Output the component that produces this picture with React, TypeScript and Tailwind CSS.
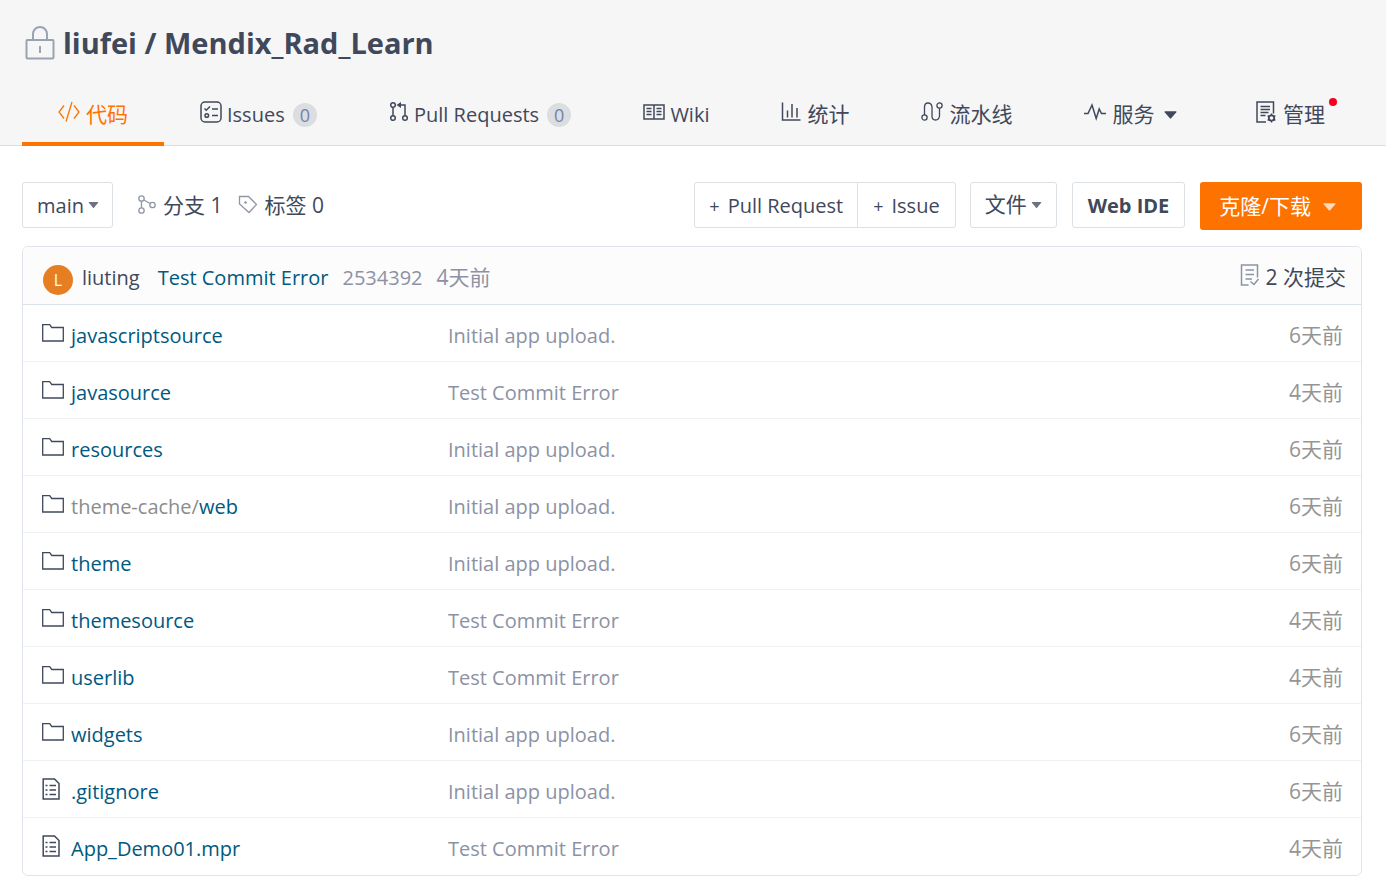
import type { ReactNode } from 'react';

type IconProps = { children: ReactNode; className?: string; box?: string };

function Icon({ children, className = 'h-[22px] w-[22px]', box = '0 0 22 22' }: IconProps) {
  return (
    <svg
      viewBox={box}
      className={`shrink-0 ${className}`}
      fill="none"
      stroke="currentColor"
      strokeWidth="1.5"
      aria-hidden="true"
    >
      {children}
    </svg>
  );
}

const LockIcon = () => (
  <Icon className="h-[34px] w-[30px] text-[#9aa3b4]" box="0 0 30 34">
    <rect x="1.500" y="14" width="27" height="18.500" rx="1" strokeWidth="2" />
    <path d="M8 14V8a7 7 0 0 1 14 0v6" strokeWidth="2" />
    <path d="M15 20v7" strokeWidth="2" />
  </Icon>
);

const CodeIcon = () => (
  <Icon>
    <path d="M6 4.500 1 11l5 6.500M16 4.500 21 11l-5 6.500M14 1 8 20.500" strokeWidth="1.300" />
  </Icon>
);

const IssuesIcon = () => (
  <Icon>
    <rect x="1" y="1" width="20" height="20" rx="4" />
    <path d="m4.500 7.500 1.700 1.700L10 5.500M12 8h6M12 14.500h6" />
    <circle cx="6.800" cy="14.500" r="1.800" />
  </Icon>
);

const PullIcon = () => (
  <Icon className="h-[22px] w-[20px]" box="0 0 20 22">
    <circle cx="4" cy="4" r="2.300" />
    <circle cx="4" cy="17" r="2.300" />
    <circle cx="16" cy="17" r="2.300" />
    <path d="M4 6.500v8M16 14.500V4H9.500" />
    <path d="M12 1 7.500 4 12 7z" fill="currentColor" stroke="none" />
  </Icon>
);

const WikiIcon = () => (
  <Icon>
    <path d="M1 4h20v14H1zM11 4v14M3.500 7.500h5M3.500 10.500h5M3.500 13.500h5M13.500 7.500h5M13.500 10.500h5M13.500 13.500h5" />
  </Icon>
);

const StatsIcon = () => (
  <Icon className="h-[22px] w-[20px]" box="0 0 20 22">
    <path d="M1.500 1.500v17.500h18M6.500 9.500v7M11 3v13.500M16 7v9.500" />
  </Icon>
);

const PipelineIcon = () => (
  <Icon>
    <circle cx="3.500" cy="16.500" r="2.600" strokeWidth="1.300" />
    <circle cx="18.500" cy="4.500" r="2.600" strokeWidth="1.300" />
    <path d="M3.500 13.900V6q0-4 3.500-4t4 4v9q0 4 3.500 4t4-4V7.100" strokeWidth="1.300" />
  </Icon>
);

const PulseIcon = () => (
  <Icon>
    <path d="M0 12.500h4L8 4l4.200 13.500 3-9.500 2.300 4.500H22" />
  </Icon>
);

const ManageIcon = () => (
  <Icon>
    <path d="M11 21H2V1h16.500v11.500M5.500 5.500h9.500M5.500 8.500h9.500M5.500 11.500h8M5.500 14.500h5" />
    <circle cx="16.500" cy="17" r="2.700" strokeWidth="1.800" />
    <path d="M16.500 12.500v2M16.500 19.500v2M12.600 14.700l1.700 1M18.700 18.300l1.700 1M12.600 19.300l1.700-1M18.700 15.700l1.700-1" />
  </Icon>
);

const BranchIcon = () => (
  <Icon className="h-[22px] w-[20px] text-[#9096a6]" box="0 0 20 22">
    <circle cx="4.500" cy="4.500" r="2.700" strokeWidth="1.300" />
    <circle cx="4.500" cy="16.500" r="2.700" strokeWidth="1.300" />
    <circle cx="15.500" cy="11" r="2.700" strokeWidth="1.300" />
    <path d="M4.500 7.200v6.600M6.800 6l6.300 3.500" strokeWidth="1.300" />
  </Icon>
);

const TagIcon = () => (
  <Icon className="h-[22px] w-[20px] text-[#9096a6]" box="0 0 20 22">
    <path d="M1.500 2.500h9l8 8-7.500 8-9.500-8.500z" strokeWidth="1.300" />
    <circle cx="7.500" cy="8.500" r="1.300" fill="currentColor" stroke="none" />
  </Icon>
);

const CommitsIcon = () => (
  <Icon className="h-[22px] w-[20px] text-[#8c92a4]" box="0 0 20 22">
    <path d="M8.500 21H1.500V1h16v12.500M5.500 6H14M5.500 10.500H14M5.500 15H12M10.500 17.500l3.500 3 4.500-5.500" />
  </Icon>
);

const FolderIcon = () => (
  <Icon className="h-[18px] w-[22px] text-[#40485b]" box="0 0 22 18">
    <path d="M.700.700h7l2 2.800h11.600v13.500H.700z" strokeWidth="1.300" />
  </Icon>
);

const FileIcon = () => (
  <Icon className="h-[22px] w-[18px] text-[#40485b]" box="0 0 18 22">
    <path d="M1.200 1h11.300l4.500 4.500V21H1.200zM7.500 7.500h6.500M7.500 12h6.500M7.500 16.500h6.500M3.500 7.500h2M3.500 12h2M3.500 16.500h2" />
  </Icon>
);

function Caret({ className = 'h-[7px] w-3' }: { className?: string }) {
  return (
    <svg viewBox="0 0 12 7" className={`shrink-0 ${className}`} fill="currentColor" aria-hidden="true">
      <path d="M1 0h10q1 0 .400 1L6.600 6.600q-.600.600-1.200 0L.600 1Q0 0 1 0z" />
    </svg>
  );
}

type TabItem = {
  label: string;
  icon: ReactNode;
  count?: number;
  caret?: boolean;
  active?: boolean;
  cjk?: boolean;
  dot?: boolean;
};

const tabs: TabItem[] = [
  { label: '代码', icon: <CodeIcon />, active: true, cjk: true },
  { label: 'Issues', icon: <IssuesIcon />, count: 0 },
  { label: 'Pull Requests', icon: <PullIcon />, count: 0 },
  { label: 'Wiki', icon: <WikiIcon /> },
  { label: '统计', icon: <StatsIcon />, cjk: true },
  { label: '流水线', icon: <PipelineIcon />, cjk: true },
  { label: '服务', icon: <PulseIcon />, caret: true, cjk: true },
  { label: '管理', icon: <ManageIcon />, dot: true, cjk: true },
];

function Tab({ tab }: { tab: TabItem }) {
  return (
    <a
      href="#"
      aria-current={tab.active ? 'page' : undefined}
      className={`flex h-[62px] items-center border-b-4 px-9 pt-[3px] ${
        tab.active ? 'border-[#fe7300] text-[#fe7300]' : 'border-transparent'
      } ${tab.dot ? 'ml-auto' : ''}`}
    >
      <span className="mb-1.5 flex">{tab.icon}</span>
      <span className={`relative ${tab.cjk ? 'ml-[6px] text-[21px]' : 'ml-[5px] text-xl'}`}>
        {tab.label}
        {tab.dot && <span className="absolute -top-0.5 -right-3 h-2 w-2 rounded-full bg-[#f5001d]" />}
      </span>
      {tab.count !== undefined && (
        <span className="ml-2 flex h-6 items-center rounded-full bg-[#dcdde0] px-[7px] text-lg text-[#7084ad]">
          {tab.count}
        </span>
      )}
      {tab.caret && <Caret className="ml-[10px] h-2 w-[13px]" />}
    </a>
  );
}

type Entry = { prefix?: string; name: string; message: string; time: string; file?: boolean };

const initial = 'Initial app upload.';
const test = 'Test Commit Error';

const entries: Entry[] = [
  { name: 'javascriptsource', message: initial, time: '6天前' },
  { name: 'javasource', message: test, time: '4天前' },
  { name: 'resources', message: initial, time: '6天前' },
  { prefix: 'theme-cache/', name: 'web', message: initial, time: '6天前' },
  { name: 'theme', message: initial, time: '6天前' },
  { name: 'themesource', message: test, time: '4天前' },
  { name: 'userlib', message: test, time: '4天前' },
  { name: 'widgets', message: initial, time: '6天前' },
  { name: '.gitignore', message: initial, time: '6天前', file: true },
  { name: 'App_Demo01.mpr', message: test, time: '4天前', file: true },
];

export default function App() {
  return (
    <div className="min-h-screen bg-white pb-4 font-['Open_Sans','Noto_Sans_CJK_SC',sans-serif] text-xl text-[#40485b]">
      <header className="border-b border-[#dcddde] bg-[#f6f6f6] pt-[21px] pr-[25px] pl-[22px]">
        <h1 className="flex h-11 items-center gap-2 pl-[3px] text-[29px] font-bold">
          <LockIcon />
          <span>liufei / Mendix_Rad_Learn</span>
        </h1>
        <nav className="mt-[19px] -mb-px flex whitespace-nowrap">
          {tabs.map((tab) => (
            <Tab key={tab.label} tab={tab} />
          ))}
        </nav>
      </header>

      <main className="pr-6 pl-[22px]">
        <div className="flex items-start justify-between pt-9 whitespace-nowrap">
          <div className="flex h-[46px] items-center">
            <label className="relative flex h-full items-center rounded-[3px] border border-[#dce1e6]">
              <select
                aria-label="分支"
                className="h-full appearance-none bg-transparent pt-px pr-[28px] pl-[14px] outline-none"
              >
                <option>main</option>
              </select>
              <span className="pointer-events-none absolute right-[13px] text-[#6b7280]">
                <Caret className="h-[6px] w-[11px]" />
              </span>
            </label>
            <a href="#" className="ml-6 flex items-center gap-1.5 pt-px text-[21px]">
              <BranchIcon />
              分支 1
            </a>
            <a href="#" className="ml-4 flex items-center gap-1.5 pt-px text-[21px]">
              <TagIcon />
              标签 0
            </a>
          </div>

          <div className="flex items-start">
            <div className="flex h-[46px] rounded-[3px] border border-[#dce1e6]">
              <button type="button" className="flex items-center gap-2 border-r border-[#dce1e6] px-[14px] pt-px">
                <span className="text-lg">+</span>Pull Request
              </button>
              <button type="button" className="flex items-center gap-2 px-[15px] pt-px">
                <span className="text-lg">+</span>Issue
              </button>
            </div>
            <button
              type="button"
              aria-haspopup="menu"
              className="ml-[14px] flex h-[46px] items-center gap-1 rounded-[3px] border border-[#dce1e6] px-[14px] text-[21px]"
            >
              文件
              <Caret className="h-[6px] w-[11px] text-[#6b7280]" />
            </button>
            <button
              type="button"
              className="ml-[15px] h-[46px] rounded-[3px] border border-[#dce1e6] px-[15px] pt-px text-xl font-bold"
            >
              Web IDE
            </button>
            <button
              type="button"
              aria-haspopup="menu"
              className="ml-[15px] flex h-12 items-center gap-3 rounded-[3px] bg-[#fe7300] pt-px pr-[26px] pl-[19px] text-[21px] text-white"
            >
              克隆/下载
              <Caret className="h-2 w-[13px] text-[#ffd9bb]" />
            </button>
          </div>
        </div>

        <section className="mt-4 overflow-hidden rounded-md border border-[#dfe4ea]">
          <div className="flex h-[58px] items-center border-b border-[#dce3e8] bg-[#fcfcfc] pt-1 pr-[15px] pl-5">
            <span className="mt-1 flex h-[30px] w-[30px] items-center justify-center rounded-full bg-[#e67e22] text-base text-white">
              L
            </span>
            <a href="#" className="ml-[9px]">
              liuting
            </a>
            <a href="#" className="ml-[18px] text-[#005980]">
              Test Commit Error
            </a>
            <a href="#" className="ml-[14px] text-[#8c92a4]">
              2534392
            </a>
            <span className="ml-[14px] text-[21px] text-[#8c92a4]">4天前</span>
            <a href="#" className="ml-auto flex items-center gap-1.5 text-[21px]">
              <span className="mb-1 flex">
                <CommitsIcon />
              </span>
              2 次提交
            </a>
          </div>
          <table className="w-full table-fixed border-separate border-spacing-0">
            <tbody>
              {entries.map((entry) => (
                <tr key={entry.name} className="h-[57px] *:border-b *:border-[#f0f2f4] *:pt-[5px] last:*:border-b-0">
                  <td className="w-[425px] pl-[19px]">
                    <a href="#" className="flex items-center text-[#005980]">
                      <span className="mb-1.5 flex w-[29px]">{entry.file ? <FileIcon /> : <FolderIcon />}</span>
                      <span>
                        {entry.prefix && <span className="text-[#8c8c8c]">{entry.prefix}</span>}
                        {entry.name}
                      </span>
                    </a>
                  </td>
                  <td className="text-[#8c92a4]">{entry.message}</td>
                  <td className="w-[120px] pr-[18px] text-right text-[21px] text-[#959595]">{entry.time}</td>
                </tr>
              ))}
            </tbody>
          </table>
        </section>
      </main>
    </div>
  );
}
